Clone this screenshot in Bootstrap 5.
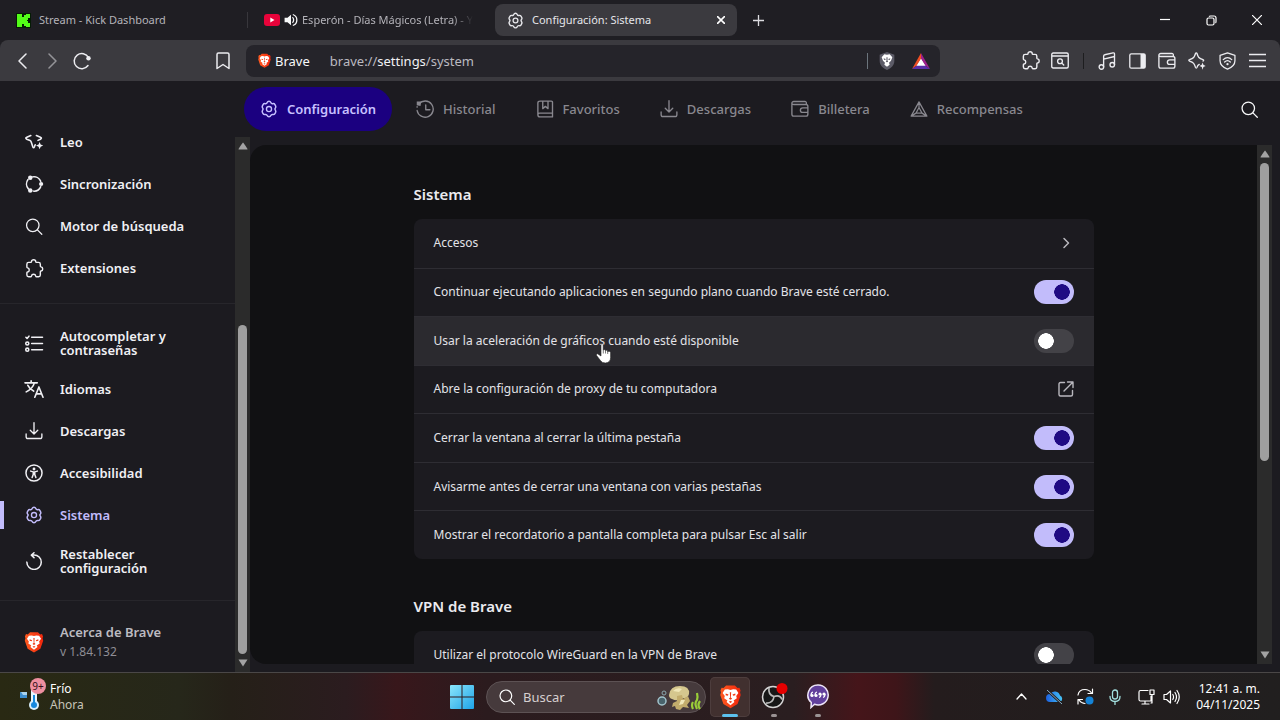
<!DOCTYPE html>
<html lang="es" data-bs-theme="dark">
<head>
<meta charset="utf-8">
<meta name="viewport" content="width=device-width, initial-scale=1">
<title>Configuración: Sistema</title>
<link href="https://cdn.jsdelivr.net/npm/bootstrap@5.3.0/dist/css/bootstrap.min.css" rel="stylesheet">
<style>
:root{--frame:#1f1e23;--bar:#3b3a3f;--surface:#1c1b20;--page:#111113;--accent:#c2bcfb;--deep:#1f0a83}
body{font-family:"Noto Sans","Open Sans",sans-serif;font-size:12px;line-height:20px;background:var(--surface);color:#e3e3e8;min-height:100vh}
.desktop{height:100vh;min-height:480px}
svg{display:block;flex:none}
.ln{fill:none;stroke:currentColor;stroke-width:1.8;stroke-linecap:round;stroke-linejoin:round}
button{border:0;background:none;color:inherit;padding:0}
a{color:inherit;text-decoration:none}
/* tab strip */
.tabstrip{height:40px;background:var(--frame);color:#b4b3b9;font-size:11px}
.tab-box{width:247px;height:32px;white-space:nowrap}
.tab-split{width:1px;height:16px;background:#38373c}
.tab-on{width:242px;background:var(--bar);color:#e6e6ea;border-radius:8px}
.tab-close{width:16px;height:16px}
.fade-end{-webkit-mask-image:linear-gradient(90deg,#000 88%,transparent);mask-image:linear-gradient(90deg,#000 88%,transparent)}
.win-btn{width:46px;height:40px;color:#fff}
.new-tab{width:42px}
/* toolbar */
.toolbar-wrap{background:var(--frame)}
.toolbar-main{height:41px;background:var(--bar);border-radius:8px 8px 0 0;color:#ececf0}
.tool-btn{width:30px;height:30px}
.tool-left{width:238px;padding-left:7px}
.tool-right{margin-left:75px}
.omni{height:32px;background:#25242a;border-radius:8px;font-size:13px}
.omni-text{color:#bbbac0}
.omni-text b{font-weight:400;color:#f1f1f4}
.omni-name{margin-right:20px}
.v-split{width:1px;height:16px}
/* settings navigation */
.topnav{height:56px;gap:8px;color:#89888f;font-size:13px;font-weight:500;margin-left:-6px}
.topnav a{height:44px;padding:0 16px;gap:9px;border-radius:22px}
.topnav a.active{background:#1b0080;color:#c7c0ff;font-weight:600}
.side{width:250px}
.side-list{padding-top:40px;font-size:13px;font-weight:600;color:#f0f0f4}
.side-list a{min-height:42px;padding:7px 24px;gap:16px}
.side-list a.tall{min-height:50px;line-height:14px}
.side-list a.active{color:var(--accent);background:linear-gradient(var(--accent),var(--accent)) left center/4px 28px no-repeat}
.side-list hr{margin:14px 0;border-top:1px solid #47464c}
.side-list a.about{color:#bcbbc1}
.about small{font-size:12px;color:#8f8e95}
.side-ico{width:20px}
.rail{width:15px;background:#2b2b2b}
.side-rail{height:calc(100% - 56px)}
.rail .thumb{width:9px;background:#9f9f9f;border-radius:5px}
.arrow-box{height:18px}
.main-col{min-width:0}
.pane{background:var(--page);border-radius:16px 0 0 16px;margin:8px 8px 8px 0;overflow:hidden}
.pane-body{padding:38px 20px 0}
.section-col{max-width:680px}
.section-col h2{font-size:15px;line-height:22px;font-weight:600;color:#ebebef;margin:0 0 14px}
.set-card{background:var(--surface);border-radius:8px;overflow:hidden}
.set-full{display:grid;grid-auto-rows:1fr;min-height:340px}
.set-row{padding:0 20px;min-height:48px}
.set-row svg.ln-soft{color:#b9b8be}
.set-row + .set-row{border-top:1px solid #2e2d33}
.set-row.hot{background:#2b2a2f}
.form-check-input.sw{width:40px;height:24px;margin:0;border:0;border-radius:12px;background-color:#434247;flex:none;
 background-image:radial-gradient(circle,#fff 7.5px,transparent 8px);background-size:24px 24px;background-repeat:no-repeat;background-position:left center}
.form-check-input.sw:checked{background-color:var(--accent);background-image:radial-gradient(circle,var(--deep) 7.5px,transparent 8px);background-position:right center}
.pointer-hand{left:182px;top:26px;z-index:3}
/* taskbar */
.taskbar{height:48px;border-top:1px solid #4a4747;color:#fff;font-size:12px;line-height:16px;
 background:linear-gradient(90deg,#292913 0,#26271a 14%,#252018 18%,#2b1c1f 27%,#38171b 31%,#2b1b1e 38%,#2a1e20 62%,#45151a 67%,#3e1519 70%,#241c1d 73%,#211f1f 100%)}
.task-side{flex:1 1 0}
.task-search{width:220px;height:32px;border-radius:16px;background:#463a3c;border:1px solid #5d5254;font-size:13px}
.task-search input{width:100px;background:none;border:0;outline:0;color:#d6cfd0;padding:0}
.task-search input::placeholder{color:#d6cfd0;opacity:1}
.task-app{width:40px;height:40px;border-radius:5px}
.task-app.on{background:#41302f;box-shadow:inset 0 0 0 1px #4d3d3d}
.run-mark{left:50%;bottom:0;width:6px;height:3px;border-radius:2px;background:#9b9394;transform:translateX(-50%)}
.on .run-mark{width:16px;background:#5cc1ee}
.wx-badge{left:10px;top:-5px;width:16px;height:16px;border-radius:50%;background:#ee8fa0;color:#331018;font-size:10px}
.wx-now{color:#c6c4b8}
</style>
</head>
<body>
<svg width="0" height="0" class="position-absolute" aria-hidden="true">
 <defs>
 <linearGradient id="gWin" x1="0" y1="0" x2="1" y2="1"><stop offset="0" stop-color="#8be6fb"/><stop offset="1" stop-color="#1ea3e8"/></linearGradient>
 <linearGradient id="gBrave" x1="0" x2="1"><stop offset="0" stop-color="#ff5a1f"/><stop offset="1" stop-color="#f0260c"/></linearGradient>
 <linearGradient id="gCloud" x1="0" x2="1"><stop offset="0" stop-color="#1b5fe0"/><stop offset="1" stop-color="#46c5f7"/></linearGradient>
 </defs>
 <symbol id="gear" viewBox="0 0 24 24"><g class="ln"><path d="M12 1.8c1.1 0 1.8.5 2.2 1.5.4 1 1.300 1.500 2.400 1.300 1.200-.2 2 .1 2.600 1.100l.8 1.500c.5 1 .4 1.800-.3 2.700-.7.800-.7 1.800 0 2.600.7.900.8 1.700.3 2.700l-.8 1.400c-.6 1-1.400 1.300-2.600 1.100-1.100-.2-2 .3-2.400 1.300-.4 1-1.100 1.500-2.200 1.500s-1.800-.5-2.200-1.500c-.4-1-1.300-1.500-2.400-1.300-1.200.2-2-.1-2.600-1.100L4 15.200c-.5-1-.4-1.800.3-2.700.7-.8.700-1.800 0-2.600C3.600 9 3.500 8.200 4 7.200l.8-1.500c.6-1 1.400-1.300 2.600-1.100 1.100.2 2-.3 2.400-1.300.4-1 1.100-1.500 2.200-1.500z" transform="translate(-1.200 -.2) scale(1.1)"/><circle cx="12" cy="12" r="3.400"/></g></symbol>
 <symbol id="search" viewBox="0 0 24 24"><g class="ln"><circle cx="10.300" cy="10.300" r="8.800"/><path d="M16.800 16.800L23 23"/></g></symbol>
 <symbol id="puzzle" viewBox="0 0 24 24"><path class="ln" d="M3 6.500C3 5 3.800 4.300 5.200 4.300h2.600c.6 0 1-.3 1-.9 0-1.400 1.200-2.400 2.700-2.400s2.700 1 2.700 2.400c0 .6.4.9 1 .9h2.600c1.400 0 2.200.8 2.200 2.200v2.300c0 .6.300 1 .9 1.100 1.400.2 2.100 1.300 2.100 2.600s-.8 2.500-2.100 2.600c-.6.100-.9.500-.9 1.100v4c0 1.400-.8 2.200-2.200 2.200h-2.500c-.6 0-1-.3-1.100-.9-.2-1.300-1.200-2.200-2.700-2.200s-2.500.9-2.700 2.200c-.1.600-.5.900-1.100.9H5.200C3.800 22.400 3 21.600 3 20.200v-2.700c0-.6.300-1 .9-1.100 1.300-.2 2.100-1.200 2.100-2.600S5.200 11.400 3.900 11.200C3.300 11.100 3 10.700 3 10.100z"/></symbol>
 <symbol id="dl" viewBox="0 0 24 24"><path class="ln" d="M12 1v15m-5-5l5 5 5-5M1.500 16v3.500c0 1.500 1 2.500 2.500 2.500h16c1.500 0 2.500-1 2.500-2.500V16"/></symbol>
 <symbol id="wallet" viewBox="0 0 24 24"><path class="ln" d="M20.500 6V4c0-1.300-.8-2-2-2H3.800C2.300 2 1.200 3 1.200 4.200S2.300 6 3.800 6H20c1.500 0 2.500 1 2.500 2.500V19c0 1.500-1 2.500-2.500 2.500H3.700c-1.500 0-2.500-1-2.500-2.500V4.200M22.500 10.500h-6.800c-2 0-3.200 1.300-3.200 3s1.200 3 3.200 3h6.800"/></symbol>
 <symbol id="lion" viewBox="0 0 24 28"><path fill="url(#gBrave)" d="M7 1.500h10l3 2.800 2.200-.4 1.300 3.200-.6 2 .8 3.200-3.600 10.400L12 27.500l-8.100-4.800L.3 12.300l.8-3.200-.6-2 1.300-3.200L4 4.300z"/><path fill="#fff" d="M12 6.500l3-.8 3.500.3L21 10l-2.500 3.400.7 2.600-3.700 2.500 1 1.800L12 24l-4.500-3.700 1-1.800L4.800 16l.7-2.600L3 10l2.500-4 3.500-.3z"/><path d="M6.500 10.500l3.200 1.200-.7 1.300-2.600-.5zM17.500 10.500l-3.200 1.200.7 1.300 2.600-.5zM11.200 9h1.600l-.4 6 1.500 1.500L12 17.700l-1.900-1.200 1.500-1.500zM10 20l2-1 2 1-2 1.400z" fill="#ef3a16"/></symbol>
 <symbol id="up" viewBox="0 0 10 8"><path fill="#a3a3a3" d="M5 0.500Q5.500.5 9.500 7 9.500 7.500 9 7.500H1Q.5 7.500.5 7 4.500.5 5 .5z"/></symbol>
 </svg>

<div class="desktop d-flex flex-column overflow-hidden">
 <header class="tabstrip d-flex align-items-center flex-shrink-0">
  <div class="tab-box d-flex align-items-center gap-2 ps-3">
   <svg width="15" height="15" viewBox="0 0 15 15"><path fill="#051b05" d="M0 0h15v15H0z"/><path fill="#53fc18" d="M1 1h5v3h2V2h2V1h4v4h-2v2h-1v1h1v2h2v4h-4v-1H8v-2H6v3H1z"/></svg>
   <span>Stream - Kick Dashboard</span>
  </div>
  <span class="tab-split"></span>
  <div class="tab-box d-flex align-items-center ps-3 pe-3">
   <svg width="16" height="12" viewBox="0 0 16 12" class="me-1"><rect width="16" height="12" rx="3" fill="#e8033a"/><path fill="#fff" d="M6.300 3.500v5l4.200-2.500z"/></svg>
   <svg width="14" height="14" viewBox="0 0 24 24" class="me-1 text-light"><path fill="currentColor" d="M1 8v8h5l6 5V3L6 8z"/><path class="ln" style="stroke-width:2.200" d="M15 8c2 2 2 6 0 8M16 3c8 3 8 15 0 18"/></svg>
   <span class="fade-end">Esperón - Días Mágicos (Letra) - Y</span>
  </div>
  <div class="tab-box tab-on d-flex align-items-center gap-2 px-2">
   <svg width="17" height="17" class="ms-1"><use href="#gear"/></svg>
   <span class="flex-fill">Configuración: Sistema</span>
   <button class="tab-close d-flex align-items-center justify-content-center text-white" aria-label="Cerrar pestaña"><svg width="8" height="8" viewBox="0 0 8 8"><path d="M0 0l8 8M8 0L0 8" stroke="currentColor" stroke-width="1.600"/></svg></button>
  </div>
  <button class="win-btn new-tab d-flex align-items-center justify-content-center me-auto" aria-label="Pestaña nueva"><svg width="11" height="11" viewBox="0 0 11 11"><path d="M5.500 0v11M0 5.500h11" stroke="#dcdce0" stroke-width="1.300"/></svg></button>
  <button class="win-btn d-flex align-items-center justify-content-center" aria-label="Minimizar"><svg width="10" height="10" viewBox="0 0 10 10"><path d="M0 4.500h10" stroke="currentColor" stroke-width="1.200"/></svg></button>
  <button class="win-btn d-flex align-items-center justify-content-center" aria-label="Restaurar"><svg width="11" height="11" viewBox="0 0 11 11" fill="none" stroke="currentColor" stroke-width="1.200"><rect x="1" y="3" width="7" height="7" rx="1.500"/><path d="M3 1.500Q3.500 1 4.500 1H8q2 0 2 2v3.500q0 1-.5 1.500"/></svg></button>
  <button class="win-btn d-flex align-items-center justify-content-center" aria-label="Cerrar"><svg width="10" height="10" viewBox="0 0 10 10"><path d="M0 0l10 10M10 0L0 10" stroke="currentColor" stroke-width="1.200"/></svg></button>
 </header>

 <div class="toolbar-wrap flex-shrink-0">
 <div class="toolbar-main d-flex align-items-center pe-2">
  <div class="tool-left d-flex align-items-center flex-shrink-0 me-2">
   <button class="tool-btn d-flex align-items-center justify-content-center" aria-label="Atrás"><svg width="9" height="16" viewBox="0 0 9 16"><path class="ln" style="stroke-width:1.500" d="M8 1L1 8l7 7"/></svg></button>
   <button class="tool-btn d-flex align-items-center justify-content-center opacity-50" aria-label="Adelante"><svg width="9" height="16" viewBox="0 0 9 16"><path class="ln" style="stroke-width:1.500" d="M1 1l7 7-7 7"/></svg></button>
   <button class="tool-btn d-flex align-items-center justify-content-center" aria-label="Recargar"><svg width="18" height="18" viewBox="0 0 18 18"><path class="ln" d="M15.500 5.500A7.600 7.600 0 1 0 15 13.500" style="stroke-width:1.500"/><circle cx="15.500" cy="6.300" r="2.200" fill="currentColor"/></svg></button>
   <button class="tool-btn d-flex align-items-center justify-content-center ms-auto" aria-label="Guardar marcador"><svg width="14" height="18" viewBox="0 0 14 18"><path class="ln" style="stroke-width:1.500" d="M1 2.500Q1 1 2.500 1h9Q13 1 13 2.500V16.500L7 12.500 1 16.500z"/></svg></button>
  </div>
  <div class="omni d-flex align-items-center flex-fill ps-2 pe-1">
   <svg width="13" height="15" class="ms-1 me-1"><use href="#lion"/></svg>
   <span class="omni-name text-light">Brave</span>
   <a href="#sistema" class="omni-text">brave://<b>settings</b>/system</a>
   <span class="v-split bg-secondary ms-auto me-1"></span>
   <button class="tool-btn d-flex align-items-center justify-content-center" aria-label="Escudos"><svg width="16" height="18" viewBox="0 0 24 27"><path fill="#5c5b67" d="M12 0l11 4v9c0 7-5 11-11 14C6 24 1 20 1 13V4z"/><path fill="#fff" d="M12 4l4-.5L20 8l-2 5-3 3 1 3-4 3-4-3 1-3-3-3-2-5 4-4.500z"/><path fill="#5c5b67" d="M7 9.500l3 1-.5 1.500-2-.5zM17 9.500l-3 1 .5 1.500 2-.5zM11.200 8h1.600v5l1 1.500-1.800 1-1.800-1 1-1.500z"/></svg></button>
   <button class="tool-btn d-flex align-items-center justify-content-center ms-1" aria-label="Brave Rewards"><svg width="18" height="16" viewBox="0 0 18 16"><path fill="#fff" d="M9 5l5 8H4z"/><path fill="#f04e23" d="M9 0v5.500L4.500 12.800 0 16z"/><path fill="#9e1f8c" d="M9 0l9 16-4.500-3.200L9 5.500z"/><path fill="#5a2fa8" d="M0 16l4.500-3.200h9L18 16z"/></svg></button>
  </div>
  <div class="tool-right d-flex align-items-center flex-shrink-0">
   <button class="tool-btn d-flex align-items-center justify-content-center" aria-label="Extensiones"><svg width="19" height="19"><use href="#puzzle"/></svg></button>
   <button class="tool-btn d-flex align-items-center justify-content-center" aria-label="Buscar pestañas"><svg width="18" height="17" viewBox="0 0 24 22"><path class="ln" d="M1 3q0-2 2-2h18q2 0 2 2v16q0 2-2 2H3q-2 0-2-2zM1 5h22"/><g class="ln"><circle cx="12" cy="12" r="3.200"/><path d="M14.500 14.500L17 17"/></g></svg></button>
   <span class="v-split bg-black opacity-50 mx-2"></span>
   <button class="tool-btn d-flex align-items-center justify-content-center" aria-label="Lista de reproducción"><svg width="18" height="18" viewBox="0 0 24 24"><g class="ln"><circle cx="4.500" cy="20" r="3"/><circle cx="19" cy="17" r="3"/><path d="M7.500 20V5.500Q7.500 4 9 3.700l11-2.500q2-.4 2 1.300V17M7.500 9.500L22 6"/></g></svg></button>
   <button class="tool-btn d-flex align-items-center justify-content-center" aria-label="Barra lateral"><svg width="17" height="16" viewBox="0 0 17 16"><rect x=".8" y=".8" width="15.400" height="14.400" rx="1.500" fill="none" stroke="currentColor" stroke-width="1.300"/><path fill="currentColor" d="M11.500 1H16v14h-4.500z"/></svg></button>
   <button class="tool-btn d-flex align-items-center justify-content-center" aria-label="Billetera"><svg width="18" height="18"><use href="#wallet"/></svg></button>
   <button class="tool-btn d-flex align-items-center justify-content-center" aria-label="Leo"><svg width="18" height="18" viewBox="0 0 24 24"><path class="ln" d="M15 16.500c-2 1-2.500 2-3 4-.4 1.200-1.600 1.200-2 0C8.500 15.500 7.500 14 2 12.200c-1.200-.4-1.200-1.700 0-2C7.500 8.500 8.500 7 10 2c.4-1.200 1.600-1.200 2 0 1.500 5 2.500 6.500 8 8.200 1.200.3 1.200 1.600 0 2"/><path fill="currentColor" d="M19.500 14l1 3 3 1.500-3 1.500-1 3.500-1.200-3.500-3-1.500 3-1.500z"/></svg></button>
   <button class="tool-btn d-flex align-items-center justify-content-center" aria-label="VPN"><svg width="17" height="18" viewBox="0 0 24 25"><path class="ln" d="M12 1l10.500 3.500V12c0 6-4.500 9.500-10.500 12C6 21.500 1.500 18 1.500 12V4.500zM6 10.500c3.500-3.500 8.500-3.500 12 0M8 14c2.500-2.500 5.500-2.500 8 0"/><circle cx="12" cy="17" r="1.600" fill="currentColor"/></svg></button>
   <button class="tool-btn d-flex align-items-center justify-content-center" aria-label="Menú"><svg width="17" height="15" viewBox="0 0 17 15"><path d="M0 1.500h17M0 7.500h17M0 13.500h17" stroke="currentColor" stroke-width="1.500"/></svg></button>
  </div>
 </div>
 </div>

 <div class="d-flex flex-fill overflow-hidden">
  <aside class="side d-flex flex-shrink-0">
   <nav class="side-list flex-fill" aria-label="Secciones">
    <a href="#leo" class="d-flex align-items-center"><svg class="side-ico" height="16" viewBox="0 0 24 20"><path class="ln" style="stroke-width:2" d="M8 2L3 4Q.500 5 3 6.500l4 1.500q1 .5 1.500 2l2 6q1 2 2 0l1-2.500M15 2l5 2q2.500 1 0 2.500L17 8"/><path fill="currentColor" d="M19 10l1.300 3.200 3.200 1.300-3.200 1.300L19 19l-1.300-3.200-3.200-1.300 3.200-1.300z"/></svg>Leo</a>
    <a href="#sync" class="d-flex align-items-center"><svg class="side-ico" height="18" viewBox="0 0 24 24"><g class="ln" style="stroke-width:2"><path d="M10 2.500a9.700 9.700 0 0 1 11 6M21 15.500a9.700 9.700 0 0 1-10 6M4.500 18.500A9.800 9.800 0 0 1 4 6"/></g><g fill="currentColor"><circle cx="7" cy="3.500" r="3"/><circle cx="21.500" cy="12" r="2.800"/><circle cx="7" cy="20.500" r="3"/></g></svg>Sincronización</a>
    <a href="#buscador" class="d-flex align-items-center"><svg class="side-ico" height="17"><use href="#search"/></svg>Motor de búsqueda</a>
    <a href="#ext" class="d-flex align-items-center"><svg class="side-ico" height="19"><use href="#puzzle"/></svg>Extensiones</a>
    <hr>
    <a href="#auto" class="tall d-flex align-items-center"><svg class="side-ico" height="17" viewBox="0 0 24 22"><path class="ln" style="stroke-width:2" d="M9 3h14M9 11h14M9 19h14M1.500 3l1.500 1.500L5.500 1.500"/><g class="ln" style="stroke-width:2"><circle cx="3.300" cy="11" r="2"/><circle cx="3.300" cy="19" r="2"/></g></svg><span>Autocompletar y<br>contraseñas</span></a>
    <a href="#idiomas" class="d-flex align-items-center"><svg class="side-ico" height="18" viewBox="0 0 24 22"><path class="ln" style="stroke-width:2" d="M1 3.500h15M8.500 1v2.500M12.500 3.500Q10.500 10.500 2.500 14.500M4.500 6.500Q7 11.500 11.500 13.500M13 21l5-12.500L23 21M14.800 17h6.500"/></svg>Idiomas</a>
    <a href="#descargas" class="d-flex align-items-center"><svg class="side-ico" height="18"><use href="#dl"/></svg>Descargas</a>
    <a href="#acc" class="d-flex align-items-center"><svg class="side-ico" height="18" viewBox="0 0 24 24"><g class="ln" style="stroke-width:2"><circle cx="12" cy="12" r="10.700"/><path d="M7.500 9.500l3.500 1h2l3.500-1M11 10.500v3.500l-1.500 4M13 10.500v3.500l1.500 4M11 13.500h2"/></g><circle cx="12" cy="6.700" r="1.900" fill="currentColor"/></svg>Accesibilidad</a>
    <a href="#sistema" class="active d-flex align-items-center"><svg class="side-ico" height="18"><use href="#gear"/></svg>Sistema</a>
    <a href="#reset" class="tall d-flex align-items-center"><svg class="side-ico" height="18" viewBox="0 0 24 24"><path class="ln" style="stroke-width:2" d="M2.500 13.500A9.600 9.600 0 1 0 12 4H9M12 1L8.500 4.200 12 7.500"/></svg><span>Restablecer<br>configuración</span></a>
    <hr>
    <a href="#acerca" class="about d-flex align-items-center pb-0"><svg class="side-ico" height="22"><use href="#lion"/></svg><span>Acerca de Brave<small class="d-block fw-normal">v 1.84.132</small></span></a>
   </nav>
   <div class="rail side-rail d-flex flex-column align-items-center mt-auto">
    <span class="arrow-box d-flex align-items-center"><svg width="10" height="8"><use href="#up"/></svg></span>
    <span style="flex:171 0 0"></span><span class="thumb" style="flex:331 0 0"></span>
    <span class="arrow-box d-flex align-items-center"><svg width="10" height="8" viewBox="0 0 10 8"><path fill="#a3a3a3" d="M.500.500h9L5 7.500z"/></svg></span>
   </div>
  </aside>

  <div class="main-col d-flex flex-column flex-fill">
   <nav class="topnav d-flex align-items-center flex-shrink-0 pe-3" aria-label="Principal">
    <a href="#config" class="active d-flex align-items-center"><svg width="18" height="18"><use href="#gear"/></svg>Configuración</a>
    <a href="#historial" class="d-flex align-items-center"><svg width="18" height="18" viewBox="0 0 24 24"><path class="ln" d="M4 5a10.800 10.800 0 1 1-2.500 9M13 6.500V13h5.500M1.500 9v.5"/><path fill="currentColor" d="M1 2l6 0-1 6-5-1z"/></svg>Historial</a>
    <a href="#favoritos" class="d-flex align-items-center"><svg width="18" height="18" viewBox="0 0 24 24"><path class="ln" d="M22 17.500V3q0-1.500-1.500-1.500h-15Q2.500 1.500 2.500 4v15.500q0 3 3 3H22M22 17.500H5q-2.500 0-2.500 2M22 17.500v5M9 2v9.500l3.500-3 3.500 3V2"/></svg>Favoritos</a>
    <a href="#descargas" class="d-flex align-items-center"><svg width="18" height="18"><use href="#dl"/></svg>Descargas</a>
    <a href="#billetera" class="d-flex align-items-center"><svg width="18" height="18"><use href="#wallet"/></svg>Billetera</a>
    <a href="#recompensas" class="d-flex align-items-center"><svg width="18" height="18" viewBox="0 0 24 24"><path class="ln" style="stroke-width:1.600" d="M12 2.500L1.500 21.500h21zM12 10l-4 7.500h8zM12 2.500V10M1.500 21.500l6.500-4M22.500 21.500l-6.500-4"/></svg>Recompensas</a>
    <button class="tool-btn d-flex align-items-center justify-content-center ms-auto text-light" aria-label="Buscar en configuración"><svg width="17" height="17"><use href="#search"/></svg></button>
   </nav>
   <main class="pane d-flex flex-fill" id="sistema">
    <div class="pane-body flex-fill">
     <section class="section-col mx-auto">
      <h2>Sistema</h2>
      <div class="set-card set-full">
       <a href="#accesos" class="set-row d-flex align-items-center justify-content-between">Accesos<svg class="ln-soft" width="16" height="16" viewBox="0 0 16 16"><path class="ln" style="stroke-width:1.500" d="M6 3.500L10.500 8 6 12.500"/></svg></a>
       <div class="set-row d-flex align-items-center justify-content-between"><label for="s1">Continuar ejecutando aplicaciones en segundo plano cuando Brave esté cerrado.</label><input class="form-check-input sw" type="checkbox" role="switch" id="s1" checked></div>
       <div class="set-row hot d-flex align-items-center justify-content-between position-relative"><label for="s2">Usar la aceleración de gráficos cuando esté disponible</label><input class="form-check-input sw" type="checkbox" role="switch" id="s2">
        <svg class="pointer-hand position-absolute" width="16" height="21" viewBox="0 0 16 21"><path fill="#fff" stroke="#222" stroke-width=".6" d="M5 1.500Q5.200.5 6 .5T7.200 1.500V7q.6-1.200 2.200 0v.6q1.100-.9 2.200.2V8.500q2.200-.8 3 1v5q0 5-5.200 5.500-3.400 0-5-2.500L.6 12.500q-.7-1.600 1-1.700L5 13z"/><path d="M7.300 7v3.500M9.500 7.500v3M11.700 8v3" stroke="#444" stroke-width=".7"/></svg>
       </div>
       <a href="#proxy" class="set-row d-flex align-items-center justify-content-between">Abre la configuración de proxy de tu computadora<svg class="ln-soft" width="16" height="16" viewBox="0 0 16 16"><path class="ln" style="stroke-width:1.400" d="M6.500 1.500h-4q-1.500 0-1.500 1.500v10.500Q1 15 2.500 15H13q1.500 0 1.500-1.500v-4M9.500 1h5.500v5.500M15 1L6 10"/></svg></a>
       <div class="set-row d-flex align-items-center justify-content-between"><label for="s3">Cerrar la ventana al cerrar la última pestaña</label><input class="form-check-input sw" type="checkbox" role="switch" id="s3" checked></div>
       <div class="set-row d-flex align-items-center justify-content-between"><label for="s4">Avisarme antes de cerrar una ventana con varias pestañas</label><input class="form-check-input sw" type="checkbox" role="switch" id="s4" checked></div>
       <div class="set-row d-flex align-items-center justify-content-between"><label for="s5">Mostrar el recordatorio a pantalla completa para pulsar Esc al salir</label><input class="form-check-input sw" type="checkbox" role="switch" id="s5" checked></div>
      </div>
     </section>
     <section class="section-col mx-auto pt-3">
      <h2 class="pt-3 mt-1">VPN de Brave</h2>
      <div class="set-card"><div class="set-row d-flex align-items-center justify-content-between"><label for="s6">Utilizar el protocolo WireGuard en la VPN de Brave</label><input class="form-check-input sw" type="checkbox" role="switch" id="s6"></div></div>
     </section>
    </div>
    <div class="rail d-flex flex-column align-items-center flex-shrink-0">
     <span class="arrow-box d-flex align-items-center"><svg width="10" height="8"><use href="#up"/></svg></span>
     <span class="thumb" style="flex:298 0 0"></span><span style="flex:185 0 0"></span>
     <span class="arrow-box d-flex align-items-center"><svg width="10" height="8" viewBox="0 0 10 8"><path fill="#a3a3a3" d="M.500.500h9L5 7.500z"/></svg></span>
    </div>
   </main>
  </div>
 </div>

 <footer class="taskbar d-flex align-items-center flex-shrink-0">
  <div class="task-side d-flex align-items-center ps-3">
   <div class="position-relative ms-1 me-1">
    <svg width="26" height="28" viewBox="0 0 26 28"><path fill="#3f8fd0" d="M0 9h7v6H0z"/><path fill="#a9d3ef" d="M1 9h6v3H3z"/><rect x="11" y="5" width="6" height="18" rx="3" fill="#e9f5fc"/><circle cx="14" cy="22" r="5" fill="#d9effb"/><circle cx="14" cy="22" r="3" fill="#1688dc"/><path d="M14 12v9" stroke="#1688dc" stroke-width="2"/></svg>
    <span class="wx-badge position-absolute d-flex align-items-center justify-content-center">9+</span>
   </div>
   <div>Frío<br><span class="wx-now">Ahora</span></div>
  </div>
  <div class="d-flex align-items-center gap-1">
   <button class="task-app d-flex align-items-center justify-content-center" aria-label="Inicio"><svg width="24" height="24" viewBox="0 0 24 24"><path fill="url(#gWin)" d="M1 0h10.500v11.500H0V1q0-1 1-1zM12.500 0H23q1 0 1 1v10.500H12.500zM0 12.500h11.500V24H1q-1 0-1-1zM12.500 12.500H24V23q0 1-1 1H12.500z"/></svg></button>
   <label class="task-search d-flex align-items-center ps-2"><svg width="16" height="16" viewBox="0 0 24 24" class="ms-1 me-2"><use href="#search"/></svg><input type="text" placeholder="Buscar" aria-label="Buscar" class="flex-fill">
    <svg width="44" height="28" viewBox="0 0 44 28" class="me-1"><circle cx="5" cy="18" r="4" fill="#49636c" stroke="#a3c4cc" stroke-width="1.500"/><circle cx="7" cy="10" r="2" fill="none" stroke="#8aa7ae"/><path fill="#d5c78e" d="M12 12Q13 3 23 3t9 8q-1 5-8 4-3 4-9 1-3-1-3-4z"/><path fill="#c2ac6c" d="M20 13l5-1 1 4 5-3 2 5-3 4 2 3-6-1-3 3-4-1-1-3-3 1 1-4 4-2z"/><path fill="#f0e7b8" d="M16 8q4-4 9-2l-3 3zM24 17l4 0-2 4-4 1z"/><path fill="none" stroke="#9ace38" stroke-width="2.200" d="M36 26q-2-4 0-7M40 26q-3-6 0-9 1-3 0-7M43 26q-3-4 0-8"/></svg></label>
   <button class="task-app on position-relative d-flex align-items-center justify-content-center" aria-label="Brave"><svg width="21" height="25"><use href="#lion"/></svg><span class="run-mark position-absolute"></span></button>
   <button class="task-app position-relative d-flex align-items-center justify-content-center" aria-label="OBS Studio"><svg width="28" height="28" viewBox="0 0 28 28"><circle cx="13" cy="14" r="10.500" fill="#171717" stroke="#d5d5d5" stroke-width="1.500"/><path fill="none" stroke="#b9b9b9" stroke-width="1.700" d="M9 5q-1 7 5 8.500M14 13.500q6-2 8 3M14 13.500q-1 7-8 6.500"/><circle cx="22" cy="5.500" r="5.500" fill="#e50000"/></svg><span class="run-mark position-absolute"></span></button>
   <button class="task-app position-relative d-flex align-items-center justify-content-center" aria-label="Chat"><svg width="22" height="25" viewBox="0 0 22 25"><path fill="#62409c" stroke="#eee5f8" stroke-width="1.500" d="M11 1a10 10 0 1 1-3.500 19.300L4 23.500 4.300 18.500A10 10 0 0 1 11 1z"/><g fill="#fff"><circle cx="5" cy="11.500" r="1.600"/><circle cx="9" cy="11.500" r="1.600"/><circle cx="13" cy="10" r="1.600"/><circle cx="17" cy="10" r="1.600"/></g><path fill="none" stroke="#fff" stroke-width="1.200" d="M4 11.500q0-3 2-3.500M8 11.500q0-3 2-3.500M14 10q0 3-2 3.500M18 10q0 3-2 3.500"/></svg><span class="run-mark position-absolute"></span></button>
  </div>
  <div class="task-side d-flex align-items-center justify-content-end pe-3">
   <button class="tool-btn d-flex align-items-center justify-content-center" aria-label="Iconos ocultos"><svg width="11" height="7" viewBox="0 0 11 7"><path class="ln" style="stroke-width:1.300" d="M1 6l4.500-5L10 6"/></svg></button>
   <button class="tool-btn d-flex align-items-center justify-content-center ms-1" aria-label="OneDrive"><svg width="18" height="16" viewBox="0 0 18 16"><path fill="url(#gCloud)" d="M4 13a4 4 0 0 1 0-8Q6 2 9.500 2.500T14 6.500a3.500 3.500 0 0 1 0 6.500z"/><path d="M1 1l15 14" stroke="#1d1d1f" stroke-width="2.500"/><path d="M1 1l15 14" stroke="#8da9c0" stroke-width="1"/></svg></button>
   <button class="tool-btn d-flex align-items-center justify-content-center" aria-label="Actualización"><svg width="17" height="17" viewBox="0 0 17 17"><path class="ln" style="stroke-width:1.200" d="M1 7Q2 1.500 8 1.500q4 0 6.500 3.500M15.500 1v4.500H11M1 16v-4.500h4.500M2 12q2.500 3.500 6 3.500"/><circle cx="12.500" cy="12.500" r="4" fill="#1583d6"/></svg></button>
   <button class="tool-btn d-flex align-items-center justify-content-center" aria-label="Micrófono"><svg width="12" height="16" viewBox="0 0 12 16"><g class="ln" style="stroke-width:1.300;stroke:#a3e0df"><rect x="3.500" y="1" width="5" height="9" rx="2.500"/><path d="M1 7.500q0 5 5 5t5-5M6 12.500V15.500"/></g></svg></button>
   <button class="d-flex align-items-center gap-2 mx-2" aria-label="Red y volumen"><svg width="17" height="16" viewBox="0 0 17 16"><path class="ln" style="stroke-width:1.200" d="M10 1.500H2.500Q1 1.500 1 3v7.500Q1 12 2.500 12H13V7M7 12v3M4 15h7M12 1h4v4.500h-4zM14 5.500V14h-1"/></svg><svg width="17" height="16" viewBox="0 0 17 16"><path class="ln" style="stroke-width:1.200" d="M1 5.500h2.500L7.500 2v12L3.500 10.500H1zM9.800 5.500q1.500 2.500 0 5M12 3.500q3 4.500 0 9M14 1.500q4.500 6.500 0 13"/></svg></button>
   <time class="text-end ms-2" datetime="2025-11-04T00:41">12:41 a. m.<br>04/11/2025</time>
   <span class="ps-1"></span>
  </div>
 </footer>
</div>
<script src="https://cdn.jsdelivr.net/npm/bootstrap@5.3.0/dist/js/bootstrap.bundle.min.js"></script>
</body>
</html>
